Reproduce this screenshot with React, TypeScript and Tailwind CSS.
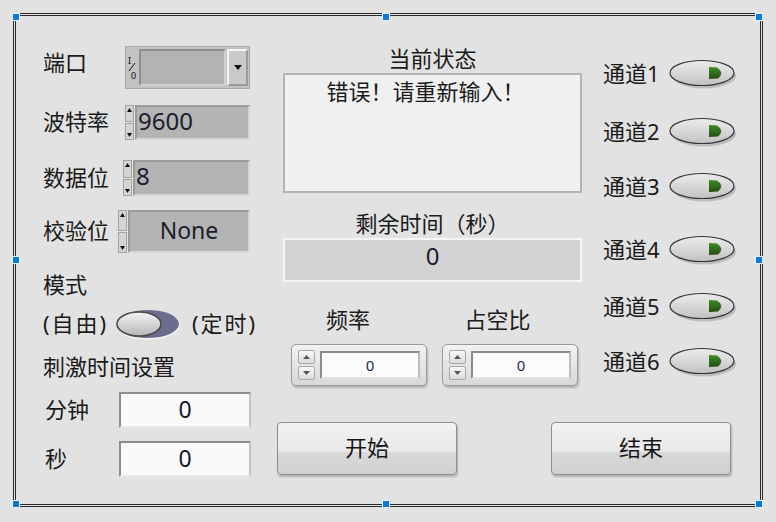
import React from 'react';

const LABEL = "text-[22px] leading-none text-[#1a1a1a] pb-[3px] whitespace-nowrap";

function Spinner() {
  return (
    <div className="flex h-full w-[9px] shrink-0 flex-col gap-[1px]">
      <div className="flex flex-1 items-start justify-center border border-[#a3a3a3] bg-[#d4d4d4] pt-[2px]">
        <svg width="5" height="4" viewBox="0 0 5 4"><path d="M2.5 0 L5 4 L0 4 Z" fill="#111" /></svg>
      </div>
      <div className="flex flex-1 items-end justify-center border border-[#a3a3a3] bg-[#d4d4d4] pb-[2px]">
        <svg width="5" height="4" viewBox="0 0 5 4"><path d="M0 0 L5 0 L2.5 4 Z" fill="#111" /></svg>
      </div>
    </div>
  );
}

function GrayField({ children, className }: { children?: React.ReactNode; className: string }) {
  return (
    <div
      className={`flex h-full items-center border-2 border-t-[#9a9a9a] border-l-[#9a9a9a] border-r-[#d6d6d6] border-b-[#d6d6d6] bg-[#b4b4b4] text-[#1c1c2c] ${className}`}
    >
      {children}
    </div>
  );
}

function WhiteInput() {
  return (
    <div className="flex h-full w-[132px] items-center justify-center border-2 border-t-[#8c8c8c] border-l-[#8c8c8c] border-r-[#c4c4c4] border-b-[#e8e8e8] bg-[#fafafa] pb-[2px] text-[23px] leading-none text-[#15152a]">
      0
    </div>
  );
}

function Toggle() {
  return (
    <svg width="66" height="33" viewBox="0 0 66 33" className="shrink-0">
      <defs>
        <linearGradient id="knob" x1="0" y1="0" x2="0" y2="1">
          <stop offset="0" stopColor="#f4f4f4" />
          <stop offset="1" stopColor="#b6b6b6" />
        </linearGradient>
      </defs>
      <ellipse cx="33" cy="17" rx="32" ry="15" fill="#f2f2f2" />
      <ellipse cx="33" cy="16" rx="31" ry="14" fill="#6c6c8e" />
      <ellipse cx="24" cy="16" rx="22" ry="12" fill="url(#knob)" stroke="#4b4b4b" strokeWidth="1.6" />
    </svg>
  );
}

function Led() {
  return (
    <svg width="68" height="30" viewBox="0 0 68 30" className="shrink-0">
      <defs>
        <linearGradient id="ledbody" x1="0" y1="0" x2="0" y2="1">
          <stop offset="0" stopColor="#ececec" />
          <stop offset="1" stopColor="#c2c2c2" />
        </linearGradient>
        <linearGradient id="ledgreen" x1="0" y1="0" x2="0" y2="1">
          <stop offset="0" stopColor="#3f8a26" />
          <stop offset="1" stopColor="#234f14" />
        </linearGradient>
      </defs>
      <ellipse cx="35" cy="17" rx="32" ry="12.5" fill="#9c9c9c" opacity="0.55" />
      <ellipse cx="33" cy="14" rx="32" ry="12.5" fill="url(#ledbody)" stroke="#353535" strokeWidth="1.2" />
      <path d="M40 8 L48 8.5 Q56 13.5 49 19.5 L40 20 Z" fill="url(#ledgreen)" />
    </svg>
  );
}

function NumericControl() {
  return (
    <div className="flex h-[42px] w-[136px] items-center rounded-[5px] border border-[#9b9b9b] bg-gradient-to-b from-[#f2f2f2] to-[#d8d8d8] pl-[6px] shadow-[1px_2px_2px_rgba(0,0,0,0.22)]">
      <div className="flex flex-col gap-[2px]">
        <div className="flex h-[14px] w-[17px] items-center justify-center rounded-[2px] border border-[#a6a6a6] bg-gradient-to-b from-[#f8f8f8] to-[#dcdcdc]">
          <svg width="7" height="4" viewBox="0 0 7 4"><path d="M3.5 0 L7 4 L0 4 Z" fill="#555" /></svg>
        </div>
        <div className="flex h-[14px] w-[17px] items-center justify-center rounded-[2px] border border-[#a6a6a6] bg-gradient-to-b from-[#f8f8f8] to-[#dcdcdc]">
          <svg width="7" height="4" viewBox="0 0 7 4"><path d="M0 0 L7 0 L3.5 4 Z" fill="#555" /></svg>
        </div>
      </div>
      <div className="ml-[5px] flex h-[28px] w-[100px] items-center justify-center border-2 border-t-[#8a8a8a] border-l-[#8a8a8a] border-r-[#bdbdbd] border-b-[#e2e2e2] bg-[#fbfbfb] text-[15px] leading-none text-[#1c2a55]">
        0
      </div>
    </div>
  );
}

function PanelButton({ label }: { label: string }) {
  return (
    <div className="flex h-[53px] w-[180px] items-center justify-center rounded-[4px] border border-[#8e8e8e] bg-[linear-gradient(#f2f2f2_0%,#e8e8e8_56%,#d8d8d8_57%,#d0d0d0_100%)] pb-[3px] text-[22px] leading-none text-[#161616] shadow-[1px_2px_2px_rgba(0,0,0,0.22)]">
      {label}
    </div>
  );
}

const handles = [
  'left-[12px] top-[13px]',
  'left-[382px] top-[13px]',
  'left-[755px] top-[13px]',
  'left-[12px] top-[256px]',
  'left-[755px] top-[256px]',
  'left-[12px] top-[500px]',
  'left-[382px] top-[500px]',
  'left-[755px] top-[500px]',
];

export default function App() {
  const channels = [
    { name: '通道1', mt: 'mt-[43px]' },
    { name: '通道2', mt: 'mt-[28px]' },
    { name: '通道3', mt: 'mt-[25px]' },
    { name: '通道4', mt: 'mt-[33px]' },
    { name: '通道5', mt: 'mt-[27px]' },
    { name: '通道6', mt: 'mt-[25px]' },
  ];

  return (
    <div className="relative h-[522px] w-[776px] overflow-hidden bg-[#e2e2e2] pl-[13px] pt-[13px] font-['Noto_Sans','Noto_Sans_CJK_SC',sans-serif]">
      <div className="flex h-[494px] w-[750px] border-[3px] border-double border-[#2a2a2a]">
        {/* Left column: serial settings + mode + timer */}
        <div className="ml-[27px] flex w-[214px] shrink-0 flex-col">
          <div className="mt-[30px] flex h-[43px] items-center">
            <span className={`mb-[8px] w-[82px] ${LABEL}`}>端口</span>
            <div className="flex h-full w-[125px] items-stretch border border-[#a9a9a9] bg-[#c2c2c2]">
              <div className="flex w-[13px] flex-col justify-center pl-[1px] text-[9px] leading-none text-[#111]">
                <span className="h-[7px] pl-[1px]">I</span>
                <svg width="10" height="8" viewBox="0 0 10 8"><path d="M8 0 L2 8" stroke="#111" strokeWidth="1" /></svg>
                <span className="h-[8px] pl-[4px]">0</span>
              </div>
              <div className="my-[2px] w-[87px] border-2 border-t-[#8e8e8e] border-l-[#8e8e8e] border-r-[#d0d0d0] border-b-[#d0d0d0] bg-[#b3b3b3]" />
              <div className="my-[2px] ml-[1px] flex w-[21px] items-center justify-center border-2 border-t-[#f4f4f4] border-l-[#f4f4f4] border-r-[#9a9a9a] border-b-[#9a9a9a] bg-[#c9c9c9]">
                <svg width="8" height="5" viewBox="0 0 8 5"><path d="M0 0 L8 0 L4 5 Z" fill="#111" /></svg>
              </div>
            </div>
          </div>

          <div className="mt-[16px] flex h-[35px] items-center">
            <span className={`w-[82px] ${LABEL}`}>波特率</span>
            <Spinner />
            <GrayField className="ml-[1px] w-[115px] pb-[4px] pl-[1px] text-[24px] leading-none">9600</GrayField>
          </div>

          <div className="mt-[20px] flex h-[36px] items-center">
            <span className={`w-[80px] ${LABEL}`}>数据位</span>
            <Spinner />
            <GrayField className="ml-[1px] w-[117px] pb-[4px] pl-[1px] text-[24px] leading-none">8</GrayField>
          </div>

          <div className="mt-[14px] flex h-[43px] items-center">
            <span className={`w-[75px] ${LABEL}`}>校验位</span>
            <Spinner />
            <GrayField className="ml-[1px] w-[122px] justify-center pb-[3px] text-[23px] leading-none">None</GrayField>
          </div>

          <div className="mt-[18px] flex h-[28px] items-center">
            <span className={LABEL}>模式</span>
          </div>

          <div className="mt-[9px] flex h-[33px] items-center">
            <span className={`w-[72px] shrink-0 tracking-[2px] ${LABEL}`}>(自由)</span>
            <Toggle />
            <span className={`ml-[11px] shrink-0 tracking-[2px] ${LABEL}`}>(定时)</span>
          </div>

          <div className="mt-[12px] flex h-[28px] items-center">
            <span className={LABEL}>刺激时间设置</span>
          </div>

          <div className="mt-[11px] flex h-[36px] items-center">
            <span className={`w-[76px] pl-[2px] ${LABEL}`}>分钟</span>
            <WhiteInput />
          </div>

          <div className="mt-[13px] flex h-[36px] items-center">
            <span className={`w-[76px] pl-[2px] ${LABEL}`}>秒</span>
            <WhiteInput />
          </div>
        </div>

        {/* Right area: status, PWM, channels, buttons */}
        <div className="ml-[20px] flex flex-col">
          <div className="flex">
            <div className="ml-[6px] flex w-[299px] flex-col">
              <div className="mt-[29px] flex h-[28px] items-center justify-center">
                <span className={LABEL}>当前状态</span>
              </div>
              <div className="h-[120px] border-2 border-[#b4b4b4] bg-[#f0f0f0] pt-[3px]">
                <div className="flex h-[28px] items-center justify-center pr-[14px]">
                  <span className={LABEL}>错误！请重新输入！</span>
                </div>
              </div>

              <div className="mt-[17px] flex h-[28px] items-center justify-center">
                <span className={LABEL}>剩余时间（秒）</span>
              </div>
              <div className="flex h-[44px] items-center justify-center border-2 border-[#f6f6f6] bg-[#d3d3d3] pb-[8px] text-[24px] leading-none text-[#1c1c2c]">
                0
              </div>

              <div className="mt-[24px] flex h-[28px] items-center">
                <span className={`w-[132px] text-center ${LABEL}`}>频率</span>
                <span className={`w-[172px] text-center ${LABEL}`}>占空比</span>
              </div>
              <div className="mt-[10px] flex">
                <div className="ml-[8px]">
                  <NumericControl />
                </div>
                <div className="ml-[15px]">
                  <NumericControl />
                </div>
              </div>
            </div>

            <div className="ml-[21px] flex w-[134px] flex-col">
              {channels.map((c) => (
                <div key={c.name} className={`flex h-[30px] items-center ${c.mt}`}>
                  <span className={`w-[68px] ${LABEL}`}>{c.name}</span>
                  <Led />
                </div>
              ))}
            </div>
          </div>

          <div className="mt-[36px] flex">
            <PanelButton label="开始" />
            <div className="ml-[94px]">
              <PanelButton label="结束" />
            </div>
          </div>
        </div>
      </div>

      {/* selection handles */}
      {handles.map((h) => (
        <div key={h} className={`absolute h-[8px] w-[8px] border border-[#e8f2ff] bg-[#0b79d8] ${h}`} />
      ))}
    </div>
  );
}
